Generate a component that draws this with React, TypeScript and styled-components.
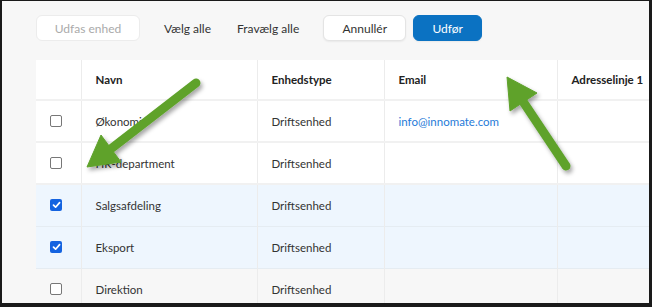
import React from "react";
import styled, {createGlobalStyle, css} from "styled-components";

const GlobalStyle = createGlobalStyle`
	html, body {
		margin: 0;
		padding: 0;
		background: #1a1a1a;
	}
	body {
		font-family: Lato, "Open Sans", sans-serif;
	}
`;

type Unit = {
	name: string;
	type: string;
	email?: string;
	checked?: boolean;
	hover?: boolean;
};

const units: Unit[] = [
	{name: "Økonomi", type: "Driftsenhed", email: "info@innomate.com"},
	{name: "HR-department", type: "Driftsenhed"},
	{name: "Salgsafdeling", type: "Driftsenhed", checked: true},
	{name: "Eksport", type: "Driftsenhed", checked: true},
	{name: "Direktion", type: "Driftsenhed", hover: true},
];

const Check = () => (
	<svg width="9" height="8" viewBox="0 0 9 8">
		<path d="M1.5 4.2 L3.6 6.2 L7.6 1.6" fill="none" stroke="#fff" strokeWidth="1.7" strokeLinecap="round" strokeLinejoin="round" />
	</svg>
);

const Arrows = () => (
	<Overlay viewBox="0 0 652 307" width="652" height="307">
		<defs>
			<filter id="sh" x="-20%" y="-20%" width="140%" height="140%">
				<feDropShadow dx="2" dy="3" stdDeviation="2" floodColor="#000" floodOpacity="0.35" />
			</filter>
		</defs>
		<g filter="url(#sh)" fill="#5fa22c" stroke="#5fa22c">
			<line x1="196" y1="83" x2="112" y2="148" strokeWidth="9" strokeLinecap="round" />
			<polygon points="87,167 121,162 101,135" strokeWidth="1" strokeLinejoin="round" />
			<line x1="566" y1="166" x2="522" y2="100" strokeWidth="9" strokeLinecap="round" />
			<polygon points="507,77 537,93 510,111" strokeWidth="1" strokeLinejoin="round" />
		</g>
	</Overlay>
);

export default function App() {
	return (
		<>
			<GlobalStyle />
			<Frame>
				<Toolbar>
					<Button disabled width={104}>
						Udfas enhed
					</Button>
					<TextButton>Vælg alle</TextButton>
					<TextButton>Fravælg alle</TextButton>
					<Button width={83}>Annullér</Button>
					<Button width={69} primary>
						Udfør
					</Button>
				</Toolbar>
				<Table>
					<colgroup>
						<col style={{width: 45}} />
						<col style={{width: 176}} />
						<col style={{width: 127}} />
						<col style={{width: 173}} />
						<col style={{width: 160}} />
					</colgroup>
					<thead>
						<tr>
							<Th />
							<Th>Navn</Th>
							<Th>Enhedstype</Th>
							<Th>Email</Th>
							<Th>Adresselinje 1</Th>
						</tr>
					</thead>
					<tbody>
						{units.map((u, i) => (
							<Row key={u.name} selected={u.checked} hover={u.hover} thick={i < 2}>
								<CheckCell>
									<Box checked={u.checked}>{u.checked && <Check />}</Box>
								</CheckCell>
								<Td>{u.name}</Td>
								<Td>{u.type}</Td>
								<Td>{u.email && <Link>{u.email}</Link>}</Td>
								<Td />
							</Row>
						))}
					</tbody>
				</Table>
				<Arrows />
			</Frame>
		</>
	);
}

const Frame = styled.div`
	position: relative;
	box-sizing: border-box;
	width: 652px;
	height: 307px;
	overflow: hidden;
	background: #f7f7f7;
	border-style: solid;
	border-color: #1a1a1a;
	border-width: 1px 3px 4px 2px;
	padding: 14px 0 0 34px;
`;

const Overlay = styled.svg`
	position: absolute;
	top: -1px;
	left: -2px;
	pointer-events: none;
`;

const Toolbar = styled.div`
	display: flex;
	align-items: center;
	gap: 24px;
	height: 26px;
	margin-bottom: 19px;
`;

const Button = styled.button<{primary?: boolean; width: number}>`
	box-sizing: border-box;
	width: ${p => p.width}px;
	height: 26px;
	padding: 0;
	border-radius: 6px;
	border: 1px solid #e4e4e4;
	background: #fff;
	color: #333;
	font-family: Lato, "Open Sans", sans-serif;
	font-size: 12px;
	white-space: nowrap;
	box-shadow: 0 1px 2px rgba(0, 0, 0, 0.06);

	&:disabled {
		color: #aaa;
		border-color: #ececec;
		box-shadow: none;
	}

	${p =>
		p.primary &&
		css`
			margin-left: -17px;
			background: #0b72c2;
			border-color: #0b72c2;
			color: #fff;
		`}
`;

const TextButton = styled.span`
	font-size: 12px;
	color: #333;
	white-space: nowrap;

	& + & {
		margin-left: 2px;
	}
`;

const Table = styled.table`
	table-layout: fixed;
	width: 681px;
	border-collapse: collapse;
	background: #fff;
	font-size: 11.5px;
	color: #333;
`;

const cellBase = css`
	box-sizing: border-box;
	padding: 0 0 0 14px;
	border-left: 1px solid #ececec;
	text-align: left;
	white-space: nowrap;
	overflow: hidden;

	&:first-child {
		border-left: none;
	}
`;

const Th = styled.th`
	${cellBase};
	height: 40px;
	font-weight: 700;
	color: #222;
	border-bottom: 2px solid #f1f1f1;
`;

const Row = styled.tr<{selected?: boolean; hover?: boolean; thick?: boolean}>`
	height: 42px;
	background: ${p => (p.selected ? "#eef6fe" : p.hover ? "#f7f7f7" : "#fff")};
	border-bottom: ${p => (p.thick ? "2px solid #f1f1f1" : "1px solid #e5ecf2")};
`;

const Td = styled.td`
	${cellBase};
`;

const CheckCell = styled.td`
	${cellBase};
	padding: 0 0 0 14px;
`;

const Box = styled.span<{checked?: boolean}>`
	box-sizing: border-box;
	display: flex;
	align-items: center;
	justify-content: center;
	width: 12px;
	height: 12px;
	border-radius: 2px;
	border: ${p => (p.checked ? "none" : "1.5px solid #777")};
	background: ${p => (p.checked ? "#1463e0" : "#fff")};
`;

const Link = styled.span`
	color: #1f7bd8;
`;
